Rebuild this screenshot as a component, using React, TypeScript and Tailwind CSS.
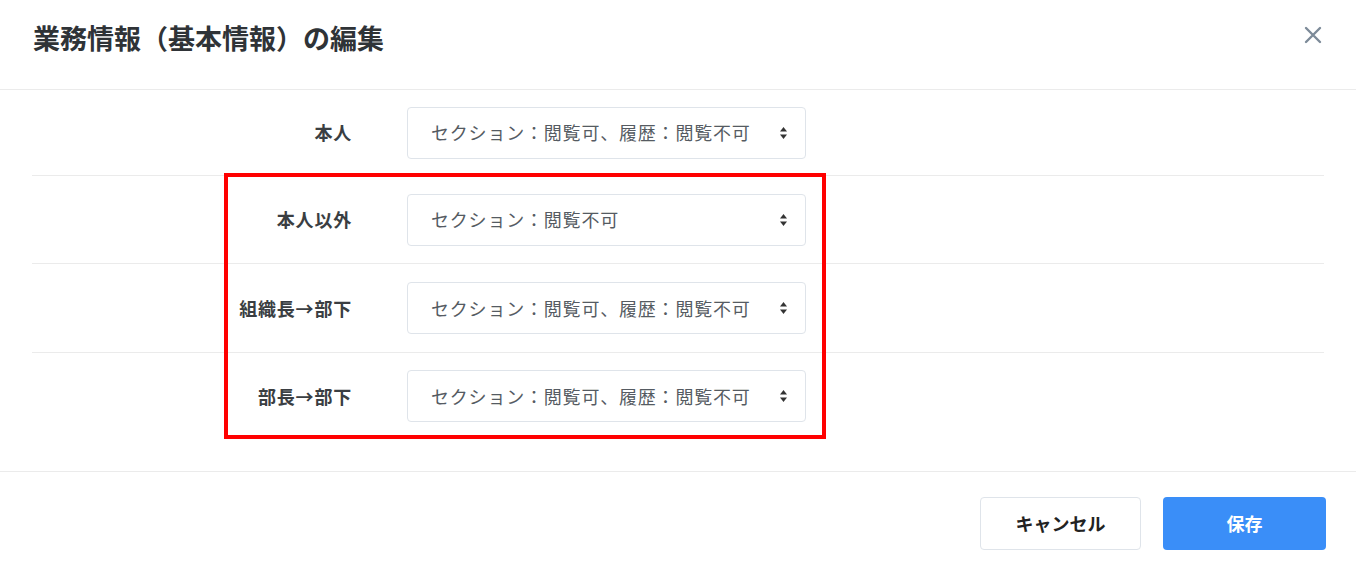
import React from 'react';

const font = { fontFamily: '"Noto Sans CJK JP", "Noto Sans", sans-serif' };

interface Row {
  label: string;
  value: string;
  h: string;
  border: boolean;
}

const rows: Row[] = [
  { label: '本人', value: 'セクション：閲覧可、履歴：閲覧不可', h: 'h-[86px]', border: true },
  { label: '本人以外', value: 'セクション：閲覧不可', h: 'h-[88px]', border: true },
  { label: '組織長→部下', value: 'セクション：閲覧可、履歴：閲覧不可', h: 'h-[89px]', border: true },
  { label: '部長→部下', value: 'セクション：閲覧可、履歴：閲覧不可', h: 'h-[86px]', border: false },
];

function SortArrows() {
  return (
    <svg width="9" height="14" viewBox="0 0 9 14" className="shrink-0">
      <path d="M4.5 1 L8 5.5 H1 Z" fill="#333" />
      <path d="M4.5 13 L8 8.5 H1 Z" fill="#333" />
    </svg>
  );
}

function SelectBox({ value }: { value: string }) {
  return (
    <div className="w-[399px] h-[52px] rounded border border-[#dfe4ea] bg-white flex items-center justify-between pl-[23px] pr-[17px]">
      <span className="text-[18px] text-[#555b62] tracking-[0.8px]">{value}</span>
      <SortArrows />
    </div>
  );
}

export default function App() {
  return (
    <div className="relative w-[1356px] h-[574px] bg-white text-[#333]" style={font}>
      {/* --- Header --- */}
      <div className="h-[90px] border-b border-[#ebebeb] flex items-start justify-between pl-[33px] pr-[34px] pt-[19px]">
        <h1 className="text-[27px] font-bold leading-[38px] text-[#2f3337]">業務情報（基本情報）の編集</h1>
        <svg width="18" height="18" viewBox="0 0 18 18" className="mt-[7px]">
          <path d="M2 2 L16 16 M16 2 L2 16" stroke="#7d8b99" strokeWidth="2.4" strokeLinecap="round" />
        </svg>
      </div>

      {/* --- Rows --- */}
      <div className="mx-8">
        {rows.map((r) => (
          <div
            key={r.label}
            className={`${r.h} flex items-center ${r.border ? 'border-b border-[#ebebeb]' : ''}`}
          >
            <div className="w-[320px] text-right text-[18px] font-bold tracking-[0.8px] text-[#3a3e42]">{r.label}</div>
            <div className="ml-[55px]">
              <SelectBox value={r.value} />
            </div>
          </div>
        ))}
      </div>

      {/* --- Footer --- */}
      <div className="mt-[32px] border-t border-[#ebebeb] flex justify-end gap-[22px] pr-[30px] pt-[25px]">
        <button className="w-[161px] h-[53px] rounded border border-[#dfe4ea] bg-white text-[18px] font-bold text-[#222]">
          キャンセル
        </button>
        <button className="w-[163px] h-[53px] rounded bg-[#3a8ef8] text-[18px] font-bold text-white">
          保存
        </button>
      </div>

      {/* annotation box */}
      <div className="absolute left-[224px] top-[173px] w-[602px] h-[266px] border-4 border-[#ff0000] pointer-events-none" />
    </div>
  );
}
